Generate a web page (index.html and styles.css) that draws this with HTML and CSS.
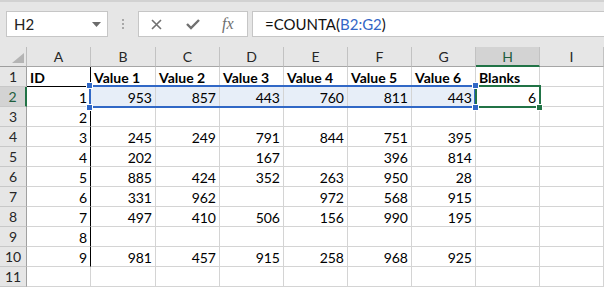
FILE: index.html
```html
<!DOCTYPE html>
<html>
<head>
<meta charset="utf-8">
<link rel="stylesheet" href="styles.css">
</head>
<body>
<div class="toolbar">
  <div class="namebox">
    <span>H2</span>
    <svg class="dd" width="9" height="5" viewBox="0 0 9 5"><path d="M0 0H9L4.5 5Z" fill="#6b6b6b"/></svg>
  </div>
  <div class="dots"><i></i><i></i><i></i></div>
  <div class="fxbox">
    <svg width="13" height="13" viewBox="0 0 13 13"><path d="M2 2L11 11M11 2L2 11" stroke="#707070" stroke-width="1.6"/></svg>
    <svg width="14" height="12" viewBox="0 0 14 12"><path d="M1 6L5 10L13 2" stroke="#707070" stroke-width="2.4" fill="none"/></svg>
    <span class="fx">fx</span>
  </div>
  <div class="formula">=COUNTA(<span class="ref">B2:G2</span>)</div>
</div>
<div class="sheet">
  <div class="grid">
    <div class="corner"><svg width="12" height="10" viewBox="0 0 12 10"><path d="M12 0V10H0Z" fill="#b4b4b4"/></svg></div>
    <div class="ch">A</div><div class="ch">B</div><div class="ch">C</div><div class="ch">D</div><div class="ch">E</div><div class="ch">F</div><div class="ch">G</div><div class="ch act">H</div><div class="ch">I</div>

    <div class="rh">1</div>
    <div class="c b a1">ID</div><div class="c b">Value 1</div><div class="c b">Value 2</div><div class="c b">Value 3</div><div class="c b">Value 4</div><div class="c b">Value 5</div><div class="c b">Value 6</div><div class="c b">Blanks</div><div class="c"></div>

    <div class="rh act">2</div>
    <div class="c n ar">1</div><div class="c n hl">953</div><div class="c n hl">857</div><div class="c n hl">443</div><div class="c n hl">760</div><div class="c n hl">811</div><div class="c n hl">443</div><div class="c n">6</div><div class="c"></div>

    <div class="rh">3</div>
    <div class="c n ar">2</div><div class="c"></div><div class="c"></div><div class="c"></div><div class="c"></div><div class="c"></div><div class="c"></div><div class="c"></div><div class="c"></div>

    <div class="rh">4</div>
    <div class="c n ar">3</div><div class="c n">245</div><div class="c n">249</div><div class="c n">791</div><div class="c n">844</div><div class="c n">751</div><div class="c n">395</div><div class="c"></div><div class="c"></div>

    <div class="rh">5</div>
    <div class="c n ar">4</div><div class="c n">202</div><div class="c n"></div><div class="c n">167</div><div class="c n"></div><div class="c n">396</div><div class="c n">814</div><div class="c"></div><div class="c"></div>

    <div class="rh">6</div>
    <div class="c n ar">5</div><div class="c n">885</div><div class="c n">424</div><div class="c n">352</div><div class="c n">263</div><div class="c n">950</div><div class="c n">28</div><div class="c"></div><div class="c"></div>

    <div class="rh">7</div>
    <div class="c n ar">6</div><div class="c n">331</div><div class="c n">962</div><div class="c n"></div><div class="c n">972</div><div class="c n">568</div><div class="c n">915</div><div class="c"></div><div class="c"></div>

    <div class="rh">8</div>
    <div class="c n ar">7</div><div class="c n">497</div><div class="c n">410</div><div class="c n">506</div><div class="c n">156</div><div class="c n">990</div><div class="c n">195</div><div class="c"></div><div class="c"></div>

    <div class="rh">9</div>
    <div class="c n ar">8</div><div class="c"></div><div class="c"></div><div class="c"></div><div class="c"></div><div class="c"></div><div class="c"></div><div class="c"></div><div class="c"></div>

    <div class="rh">10</div>
    <div class="c n ar">9</div><div class="c n">981</div><div class="c n">457</div><div class="c n">915</div><div class="c n">258</div><div class="c n">968</div><div class="c n">925</div><div class="c"></div><div class="c"></div>

    <div class="rh">11</div>
    <div class="c"></div><div class="c"></div><div class="c"></div><div class="c"></div><div class="c"></div><div class="c"></div><div class="c"></div><div class="c"></div><div class="c"></div>
  </div>
  <div class="sel-blue"></div>
  <div class="sel-green"></div>
  <div class="handle blue h-tl"></div>
  <div class="handle blue h-bl"></div>
  <div class="handle blue h-tr"></div>
  <div class="handle blue h-br"></div>
  <div class="handle green h-g"></div>
</div>
</body>
</html>
```

FILE: styles.css
```css
html, body {
  margin: 0;
  padding: 0;
  background: #ffffff;
}
body {
  width: 604px;
  height: 287px;
  overflow: hidden;
  font-family: Lato, "Liberation Sans", sans-serif;
  font-size: 14px;
  color: #000;
}
.toolbar {
  height: 47px;
  box-sizing: border-box;
  background: #e6e6e6;
  border-top: 2px solid #d2d2d2;
  padding-top: 9px;
  display: flex;
  align-items: flex-start;
}
.namebox {
  margin-left: 6px;
  width: 102px;
  height: 26px;
  box-sizing: border-box;
  background: #fff;
  border: 1px solid #c6c6c6;
  display: flex;
  align-items: center;
  justify-content: space-between;
  padding: 0 6px 0 7px;
  color: #222;
  font-size: 15px;
}
.dd { margin-top: 1px; }
.dots {
  width: 30px;
  height: 26px;
  display: flex;
  flex-direction: column;
  align-items: center;
  justify-content: center;
  gap: 2px;
}
.dots i {
  display: block;
  width: 2px;
  height: 2px;
  background: #a8a8a8;
}
.fxbox {
  width: 110px;
  height: 26px;
  box-sizing: border-box;
  background: #fff;
  border: 1px solid #c6c6c6;
  display: flex;
  align-items: center;
  padding-left: 11px;
  gap: 23px;
}
.fx {
  font-family: "Liberation Serif", serif;
  font-style: italic;
  font-size: 16px;
  color: #6e6e6e;
  margin-left: -1px;
}
.formula {
  margin-left: 4px;
  flex: 1;
  height: 26px;
  box-sizing: border-box;
  background: #fff;
  border: 1px solid #c6c6c6;
  border-right: none;
  padding-left: 12px;
  line-height: 24px;
  font-size: 15px;
  color: #111;
}
.ref { color: #3466c6; }

.sheet {
  position: relative;
}
.grid {
  display: grid;
  grid-template-columns: 27px 64px 65px repeat(7, 64px);
  grid-auto-rows: 20px;
}
.grid > div {
  box-sizing: border-box;
  border-right: 1px solid #d4d4d4;
  border-bottom: 1px solid #d4d4d4;
  white-space: nowrap;
  overflow: hidden;
}
.corner {
  background: #e6e6e6;
  display: flex;
  align-items: flex-end;
  justify-content: flex-end;
  padding: 0 2px 3px 0;
  border-right-color: #bcbcbc !important;
  border-bottom-color: #9e9e9e !important;
}
.ch {
  background: #e6e6e6;
  color: #262626;
  text-align: center;
  line-height: 20px;
  border-right-color: #c2c2c2 !important;
  border-bottom-color: #a6a6a6 !important;
}
.ch.act {
  background: #d3d3d3;
  color: #1f5e3e;
  border-bottom: 2px solid #217346 !important;
  line-height: 19px;
}
.rh {
  background: #e6e6e6;
  color: #262626;
  text-align: center;
  line-height: 20px;
  border-right-color: #a0a0a0 !important;
  border-bottom-color: #c8c8c8 !important;
}
.rh.act {
  background: #d3d3d3;
  border-right: 2px solid #217346 !important;
  color: #1f5e3e;
}
.c {
  line-height: 21px;
  padding: 0 3px;
}
.b { font-weight: 700; }
.n { text-align: right; }
.hl { background: #e7eef8; }
.a1 {
  border-bottom-color: #000 !important;
  border-right-color: #000 !important;
}
.ar { border-right-color: #000 !important; }

.sel-blue {
  position: absolute;
  left: 89px;
  top: 38px;
  width: 387px;
  height: 23px;
  box-sizing: border-box;
  border: 2px solid #3168c6;
}
.sel-green {
  position: absolute;
  left: 475px;
  top: 38px;
  width: 66px;
  height: 23px;
  box-sizing: border-box;
  border: 2px solid #217346;
}
.handle {
  position: absolute;
  width: 7px;
  height: 7px;
  box-sizing: border-box;
  border: 1px solid #fff;
}
.handle.blue { background: #3168c6; }
.handle.green { background: #217346; }
.h-tl { left: 86px; top: 35px; }
.h-bl { left: 86px; top: 57px; }
.h-tr { left: 472px; top: 35px; }
.h-br { left: 472px; top: 57px; }
.h-g { left: 536px; top: 57px; }
```
